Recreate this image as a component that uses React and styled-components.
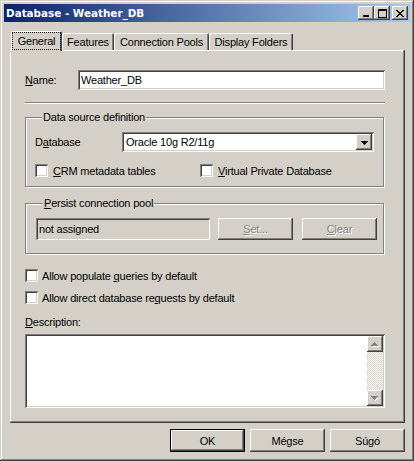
import React from 'react';
import styled, { createGlobalStyle, css } from 'styled-components';

const FACE = '#d4d0c8';

const GlobalStyle = createGlobalStyle`
  html, body { margin: 0; padding: 0; background: ${FACE}; }
  body {
    font-family: "Liberation Sans", Arial, sans-serif;
    font-size: 11px;
    letter-spacing: -0.2px;
    color: #000;
  }
  * { box-sizing: border-box; }
`;

const raised = css`
  box-shadow: inset -1px -1px #404040, inset 1px 1px #ffffff,
    inset -2px -2px #808080, inset 2px 2px ${FACE};
`;
const sunken = css`
  box-shadow: inset 1px 1px #808080, inset -1px -1px #ffffff,
    inset 2px 2px #404040, inset -2px -2px ${FACE};
`;

const Window = styled.div`
  width: 414px;
  height: 461px;
  padding: 4px;
  background: ${FACE};
  display: flex;
  flex-direction: column;
  box-shadow: inset -1px -1px #404040, inset 1px 1px ${FACE},
    inset -2px -2px #808080, inset 2px 2px #ffffff;
`;

const TitleBar = styled.div`
  height: 18px;
  flex: none;
  display: flex;
  align-items: center;
  justify-content: space-between;
  padding: 0 2px 0 2px;
  background: linear-gradient(to right, #0a246a, #a6caf0);
`;

const Title = styled.span`
  font-family: "DejaVu Sans", Verdana, sans-serif;
  font-weight: bold;
  font-size: 10.4px;
  letter-spacing: 0;
  color: #fff;
  white-space: nowrap;
`;

const CaptionButtons = styled.div`
  display: flex;
  align-items: center;
`;

const CaptionButton = styled.div`
  width: 16px;
  height: 14px;
  background: ${FACE};
  display: flex;
  align-items: center;
  justify-content: center;
  margin-left: ${(p) => (p.$gap ? '2px' : '0')};
  ${raised}
`;

const GlyphSvg = styled.svg`
  display: block;
  shape-rendering: crispEdges;
  flex: none;
`;

const Glyph = ({ rows, color = '#000', emboss = false }) => {
  const w = rows[0].length;
  const h = rows.length;
  const pts = [];
  rows.forEach((r, y) =>
    [...r].forEach((c, x) => {
      if (c === 'X') pts.push([x, y]);
    })
  );
  const e = emboss ? 1 : 0;
  return (
    <GlyphSvg width={w + e} height={h + e} viewBox={`0 0 ${w + e} ${h + e}`}>
      {emboss &&
        pts.map(([x, y]) => (
          <rect key={`s${x}-${y}`} x={x + 1} y={y + 1} width="1" height="1" fill="#fff" />
        ))}
      {pts.map(([x, y]) => (
        <rect key={`p${x}-${y}`} x={x} y={y} width="1" height="1" fill={color} />
      ))}
    </GlyphSvg>
  );
};

const MIN = ['......', '......', '......', '......', '......', '......', 'XXXXXX', 'XXXXXX'];
const MAX = [
  'XXXXXXXXX',
  'XXXXXXXXX',
  'X.......X',
  'X.......X',
  'X.......X',
  'X.......X',
  'X.......X',
  'X.......X',
  'XXXXXXXXX',
];
const CLOSE = ['XX....XX', '.XX..XX.', '..XXXX..', '...XX...', '..XXXX..', '.XX..XX.', 'XX....XX'];
const DOWN = ['XXXXXXX', '.XXXXX.', '..XXX..', '...X...'];
const UP = ['...X...', '..XXX..', '.XXXXX.', 'XXXXXXX'];

const Client = styled.div`
  flex: 1;
  display: flex;
  flex-direction: column;
  padding: 9px 5px 5px 6px;
  min-height: 0;
`;

const TabStrip = styled.div`
  height: 19px;
  flex: none;
  display: flex;
  align-items: flex-end;
  padding-left: 1px;
`;

const Tab = styled.div`
  position: relative;
  width: ${(p) => p.$w}px;
  height: ${(p) => (p.$active ? 20 : 17)}px;
  margin-bottom: ${(p) => (p.$active ? '-1px' : '0')};
  z-index: ${(p) => (p.$active ? 2 : 0)};
  background: ${FACE};
  border-radius: 2px 2px 0 0;
  display: flex;
  align-items: center;
  justify-content: center;
  padding-top: ${(p) => (p.$active ? '0' : '1px')};
  white-space: nowrap;
  box-shadow: inset 1px 1px #ffffff, inset -1px 0 #404040, inset -2px 0 #808080;
`;

const FocusLabel = styled.span`
  display: block;
  line-height: 14px;
  padding: 1px 5px 1px 5px;
  margin-top: -1px;
  outline: 1px dotted #000;
`;

const Panel = styled.div`
  flex: 1;
  display: flex;
  flex-direction: column;
  padding: 20px 20px 0 15px;
  background: ${FACE};
  ${raised}
`;

const NameRow = styled.div`
  display: flex;
  align-items: center;
  height: 20px;
`;

const Label = styled.span`
  width: ${(p) => p.$w || 'auto'};
  flex: none;
  white-space: nowrap;
`;

const TextBox = styled.div`
  flex: 1;
  height: ${(p) => p.$h || 20}px;
  display: flex;
  align-items: center;
  padding: 0 3px;
  background: ${(p) => (p.$readonly ? FACE : '#fff')};
  white-space: nowrap;
  ${sunken}
`;

const Separator = styled.div`
  margin-top: 12px;
  height: 2px;
  border-top: 1px solid #808080;
  border-bottom: 1px solid #ffffff;
`;

const Group = styled.fieldset`
  margin: ${(p) => p.$mt}px 1px 0 0;
  padding: ${(p) => p.$pad};
  border: 1px solid #808080;
  box-shadow: inset 1px 1px #ffffff, 1px 1px #ffffff;
  min-width: 0;
`;

const Legend = styled.legend`
  margin-left: 7px;
  padding: 0 1px;
  line-height: 13px;
  background: ${FACE};
`;

const SelectRow = styled.div`
  display: grid;
  grid-template-columns: 87px 1fr;
  align-items: center;
`;

const Select = styled.div`
  height: 20px;
  display: flex;
  align-items: center;
  padding: 2px;
  background: #fff;
  ${sunken}
`;

const SelectValue = styled.span`
  flex: 1;
  padding-left: 2px;
`;

const ArrowButton = styled.div`
  width: 16px;
  height: 16px;
  flex: none;
  display: flex;
  align-items: center;
  justify-content: center;
  padding-top: ${(p) => (p.$up ? '0' : '1px')};
  background: ${FACE};
  ${raised}
`;

const CheckGrid = styled.div`
  display: grid;
  grid-template-columns: 165px 1fr;
  margin-top: 12px;
`;

const Check = styled.div`
  display: flex;
  align-items: center;
  gap: ${(p) => p.$gap || 5}px;
  height: 13px;
  margin-top: ${(p) => p.$mt || 0}px;
  white-space: nowrap;
`;

const CheckBox = styled.span`
  width: 13px;
  height: 13px;
  flex: none;
  background: #fff;
  ${sunken}
`;

const PoolRow = styled.div`
  display: flex;
  align-items: center;
`;

const Button = styled.div`
  width: 75px;
  height: ${(p) => p.$h || 23}px;
  flex: none;
  display: flex;
  align-items: center;
  justify-content: center;
  margin-left: ${(p) => p.$ml || 0}px;
  background: ${FACE};
  color: ${(p) => (p.$disabled ? '#808080' : '#000')};
  text-shadow: ${(p) => (p.$disabled ? '1px 1px #ffffff' : 'none')};
  ${(p) =>
    p.$default
      ? css`
          box-shadow: inset 0 0 0 1px #000, inset -2px -2px #404040, inset 2px 2px #ffffff,
            inset -3px -3px #808080, inset 3px 3px ${FACE};
        `
      : raised}
`;

const DescLabel = styled.div`
  margin-top: 12px;
  line-height: 13px;
`;

const Memo = styled.div`
  margin-top: 5px;
  height: 74px;
  display: flex;
  padding: 2px;
  background: #fff;
  ${sunken}
`;

const MemoText = styled.div`
  flex: 1;
`;

const ScrollBar = styled.div`
  width: 16px;
  display: flex;
  flex-direction: column;
`;

const ScrollTrack = styled.div`
  flex: 1;
  background-color: #fff;
  background-image: repeating-conic-gradient(${FACE} 0 25%, #ffffff 0 50%);
  background-size: 2px 2px;
`;

const Footer = styled.div`
  flex: none;
  display: flex;
  justify-content: flex-end;
  gap: 5px;
  margin-top: 6px;
`;

const tabs = [
  { label: 'General', w: 51, active: true },
  { label: 'Features', w: 52 },
  { label: 'Connection Pools', w: 95 },
  { label: 'Display Folders', w: 84 },
];

export default function App() {
  return (
    <>
      <GlobalStyle />
      <Window>
        <TitleBar>
          <Title>Database - Weather_DB</Title>
          <CaptionButtons>
            <CaptionButton>
              <Glyph rows={MIN} />
            </CaptionButton>
            <CaptionButton>
              <Glyph rows={MAX} />
            </CaptionButton>
            <CaptionButton $gap>
              <Glyph rows={CLOSE} />
            </CaptionButton>
          </CaptionButtons>
        </TitleBar>
        <Client>
          <TabStrip>
            {tabs.map((t) => (
              <Tab key={t.label} $w={t.w} $active={t.active}>
                {t.active ? <FocusLabel>{t.label}</FocusLabel> : t.label}
              </Tab>
            ))}
          </TabStrip>
          <Panel>
            <NameRow>
              <Label $w="53px">
                <u>N</u>ame:
              </Label>
              <TextBox>Weather_DB</TextBox>
            </NameRow>
            <Separator />
            <Group $mt={7} $pad="8px 9px 9px 9px">
              <Legend>Data source definition</Legend>
              <SelectRow>
                <Label>
                  D<u>a</u>tabase
                </Label>
                <Select>
                  <SelectValue>Oracle 10g R2/11g</SelectValue>
                  <ArrowButton>
                    <Glyph rows={DOWN} />
                  </ArrowButton>
                </Select>
              </SelectRow>
              <CheckGrid>
                <Check>
                  <CheckBox />
                  <span>
                    <u>C</u>RM metadata tables
                  </span>
                </Check>
                <Check>
                  <CheckBox />
                  <span>
                    <u>V</u>irtual Private Database
                  </span>
                </Check>
              </CheckGrid>
            </Group>
            <Group $mt={10} $pad="8px 6px 13px 10px">
              <Legend>
                <u>P</u>ersist connection pool
              </Legend>
              <PoolRow>
                <TextBox $readonly $h={22}>
                  not assigned
                </TextBox>
                <Button $disabled $h={22} $ml={8}>
                  <span>
                    <u>S</u>et...
                  </span>
                </Button>
                <Button $disabled $h={22} $ml={9}>
                  <span>
                    <u>C</u>lear
                  </span>
                </Button>
              </PoolRow>
            </Group>
            <Check $gap={4} $mt={15}>
              <CheckBox />
              <span>
                Allow populate <u>q</u>ueries by default
              </span>
            </Check>
            <Check $gap={4} $mt={9}>
              <CheckBox />
              <span>
                Allow direct database re<u>q</u>uests by default
              </span>
            </Check>
            <DescLabel>
              <u>D</u>escription:
            </DescLabel>
            <Memo>
              <MemoText />
              <ScrollBar>
                <ArrowButton $up>
                  <Glyph rows={UP} color="#808080" emboss />
                </ArrowButton>
                <ScrollTrack />
                <ArrowButton>
                  <Glyph rows={DOWN} color="#808080" emboss />
                </ArrowButton>
              </ScrollBar>
            </Memo>
          </Panel>
          <Footer>
            <Button $default>OK</Button>
            <Button>Mégse</Button>
            <Button>Súgó</Button>
          </Footer>
        </Client>
      </Window>
    </>
  );
}
